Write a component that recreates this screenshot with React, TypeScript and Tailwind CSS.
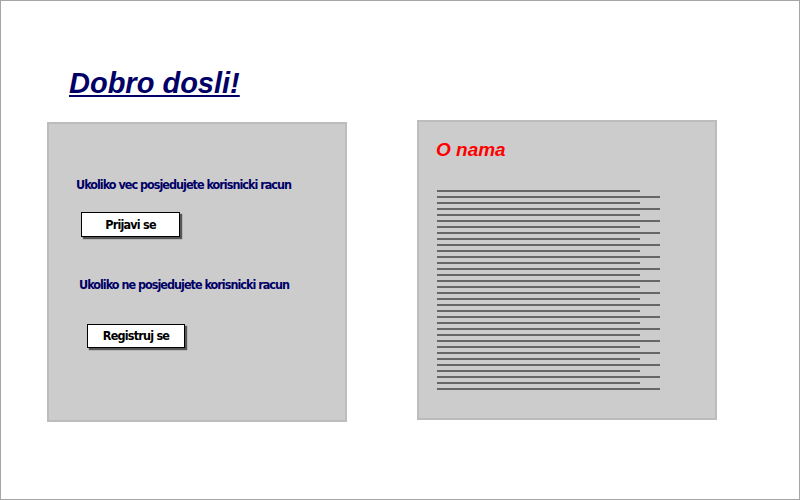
import React from "react";

const lines = Array.from({ length: 34 }, (_, i) => i);

const App = () => {
  return (
    <div className="w-[800px] h-[500px] bg-white border border-[#a6a6a6] px-[46px] font-['Liberation_Sans',Arial,sans-serif]">
      <h1 className="mt-[68px] ml-[22px] text-[29px] leading-none font-bold italic underline text-[#000066] w-fit">
        Dobro dosli!
      </h1>
      <div className="flex items-start gap-[70px]">
        <div className="mt-[24px] w-[300px] h-[300px] bg-[#cccccc] border-2 border-[#bcbcbc] flex flex-col items-start font-['DejaVu_Sans_Condensed',sans-serif] font-bold text-[12.5px] leading-[14px] tracking-[-1px] text-[#000066]">
          <p className="mt-[54px] ml-[27px]">Ukoliko vec posjedujete korisnicki racun</p>
          <button className="mt-[20px] ml-[32px] w-[99px] h-[25px] bg-white border border-black shadow-[2px_2px_1px_#555] text-black text-[12.5px] tracking-[-0.8px]">
            Prijavi se
          </button>
          <p className="mt-[41px] ml-[30px]">Ukoliko ne posjedujete korisnicki racun</p>
          <button className="mt-[32px] ml-[38px] w-[98px] h-[24px] bg-white border border-black shadow-[2px_2px_1px_#555] text-black text-[12.5px] tracking-[-0.8px]">
            Registruj se
          </button>
        </div>
        <div className="mt-[22px] w-[300px] h-[300px] bg-[#cccccc] border-2 border-[#bcbcbc] flex flex-col items-start">
          <h2 className="mt-[18px] ml-[17px] text-[19px] leading-none font-bold italic text-[#ff0000]">O nama</h2>
          <div className="mt-[31px] ml-[18px] flex flex-col gap-[4px]">
            {lines.map((i) => (
              <div
                key={i}
                className={i % 2 === 0 ? "h-[2px] w-[203px] bg-[#666666]" : "h-[2px] w-[223px] bg-[#666666]"}
              />
            ))}
          </div>
        </div>
      </div>
    </div>
  );
};

export default App;
